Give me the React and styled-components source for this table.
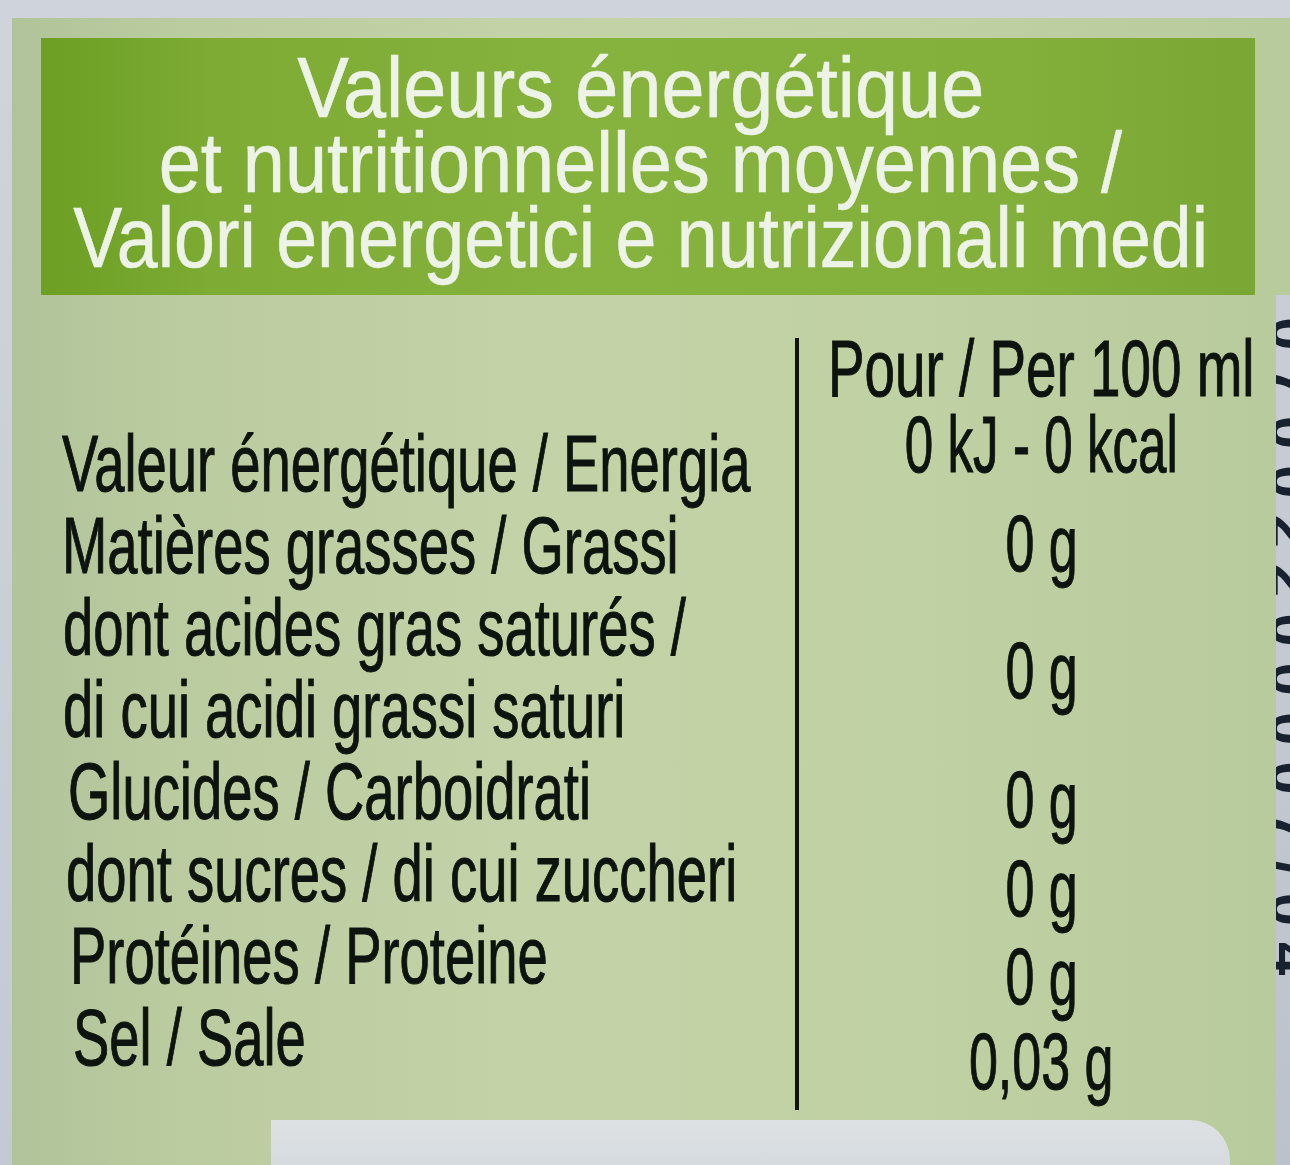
import React from 'react';
import styled, { createGlobalStyle } from 'styled-components';

const GlobalStyle = createGlobalStyle`
  html, body {
    margin: 0;
    padding: 0;
  }
  body {
    width: 1290px;
    height: 1165px;
    overflow: hidden;
    background: #c6cbd4;
    font-family: "Liberation Sans", Arial, sans-serif;
  }
`;

// whole photo frame: grey surface with the label sheet on it
const Page = styled.div`
  width: 1290px;
  height: 1165px;
  box-sizing: border-box;
  padding: 18px 0 0 12px;
  display: flex;
  background: linear-gradient(180deg, #cfd4dc 0%, #c4cad3 100%);
  overflow: hidden;
`;

const Sheet = styled.div`
  flex: 1;
  min-width: 0;
  display: flex;
  flex-direction: column;
  background: linear-gradient(
    90deg,
    #b1c39a 0%,
    #bacb9f 12%,
    #c3d3a7 40%,
    #c0d1a3 70%,
    #b8cb9c 100%
  );
`;

const HeaderWrap = styled.div`
  padding: 20px 35px 0 29px;
`;

const HeaderBox = styled.div`
  height: 257px;
  box-sizing: border-box;
  padding: 12px 15px 0 0;
  display: flex;
  flex-direction: column;
  align-items: center;
  background: linear-gradient(
    90deg,
    #6c9f24 0%,
    #7dab33 14%,
    #86b23e 45%,
    #83af3b 80%,
    #7aa733 100%
  );
`;

const HeaderLine = styled.div`
  font-size: 86px;
  line-height: 75px;
  color: #eef3e7;
  white-space: nowrap;
  -webkit-text-stroke: 0.6px #eef3e7;
  transform: scaleX(${p => p.$sx});
`;

const Body = styled.div`
  flex: 1;
  display: flex;
  min-height: 0;
`;

const Main = styled.div`
  flex: 1;
  min-width: 0;
  display: flex;
  flex-direction: column;
  padding-top: 43px;
`;

const Table = styled.div`
  display: grid;
  grid-template-columns: 733px 4px minmax(0, 1fr);
  grid-template-rows: 85px 82px 82px 164px 82px 82px 82px 82px 31px;
  padding-left: 50px;
  color: #0d140f;
  font-size: 80px;
  line-height: 82px;
  -webkit-text-stroke: 1px #0d140f;
`;

const Rule = styled.div`
  grid-column: 2;
  grid-row: 1 / -1;
  background: #101510;
`;

const LabelCell = styled.div`
  grid-column: 1;
  min-width: 0;
  padding-left: ${p => (p.$indent || 0) + 'px'};
`;

const LabelText = styled.span`
  display: block;
  width: max-content;
  white-space: nowrap;
  transform: scaleX(0.68);
  transform-origin: left center;
`;

const ValueCell = styled.div`
  grid-column: 3;
  min-width: 0;
  display: flex;
  justify-content: center;
  align-self: ${p => (p.$middle ? 'center' : 'start')};
  padding-left: 8px;
  margin-top: ${p => (p.$shift || 0) + 'px'};
`;

const ValueText = styled.span`
  display: block;
  flex-shrink: 0;
  width: max-content;
  white-space: nowrap;
  transform: scaleX(${p => p.$sx || 0.65});
`;

const Sticker = styled.div`
  flex: 1;
  margin: 10px 0 0 259px;
  width: 959px;
  background: linear-gradient(180deg, #dde1e4 0%, #d6dbdf 100%);
  border-top-right-radius: 40px;
`;

// the neighbouring label peeking in at the right edge
const EdgeStrip = styled.div`
  width: 14px;
  flex-shrink: 0;
  display: flex;
  overflow: hidden;
  background: linear-gradient(180deg, #c9ced6 0%, #bcc2cb 100%);
`;

const EdgeDigits = styled.span`
  flex-shrink: 0;
  writing-mode: vertical-rl;
  white-space: nowrap;
  font-size: 60px;
  font-weight: 700;
  line-height: 30px;
  letter-spacing: 16px;
  padding-top: 22px;
  color: #18212f;
`;

const rows = [
  { label: ['Valeur énergétique / Energia'], value: '0 kJ - 0 kcal', shift: -19, indent: -9, sx: 0.64 },
  { label: ['Matières grasses / Grassi'], value: '0 g', shift: -2, indent: -2 },
  { label: ['dont acides gras saturés /', 'di cui acidi grassi saturi'], value: '0 g', middle: true, shift: 3, indent: 1 },
  { label: ['Glucides / Carboidrati'], value: '0 g', shift: 8, indent: 6 },
  { label: ['dont sucres / di cui zuccheri'], value: '0 g', shift: 15, indent: 4 },
  { label: ['Protéines / Proteine'], value: '0 g', shift: 21, indent: 8 },
  { label: ['Sel / Sale'], value: '0,03 g', shift: 24, indent: 11 },
];

export default function App() {
  return (
    <>
      <GlobalStyle />
      <Page>
        <Sheet>
          <HeaderWrap>
            <HeaderBox>
              <HeaderLine $sx={0.9}>Valeurs énergétique</HeaderLine>
              <HeaderLine $sx={0.88}>et nutritionnelles moyennes /</HeaderLine>
              <HeaderLine $sx={0.855}>Valori energetici e nutrizionali medi</HeaderLine>
            </HeaderBox>
          </HeaderWrap>
          <Body>
            <Main>
              <Table>
                <Rule />
                <LabelCell />
                <ValueCell $shift={-10}>
                  <ValueText $sx={0.685}>Pour / Per 100 ml</ValueText>
                </ValueCell>
                {rows.map((row, i) => (
                  <React.Fragment key={i}>
                    <LabelCell $indent={row.indent}>
                      {row.label.map(line => (
                        <LabelText key={line}>{line}</LabelText>
                      ))}
                    </LabelCell>
                    <ValueCell $shift={row.shift} $middle={row.middle}>
                      <ValueText $sx={row.sx}>{row.value}</ValueText>
                    </ValueCell>
                  </React.Fragment>
                ))}
              </Table>
              <Sticker />
            </Main>
            <EdgeStrip>
              <EdgeDigits>07002200007/04</EdgeDigits>
            </EdgeStrip>
          </Body>
        </Sheet>
      </Page>
    </>
  );
}
